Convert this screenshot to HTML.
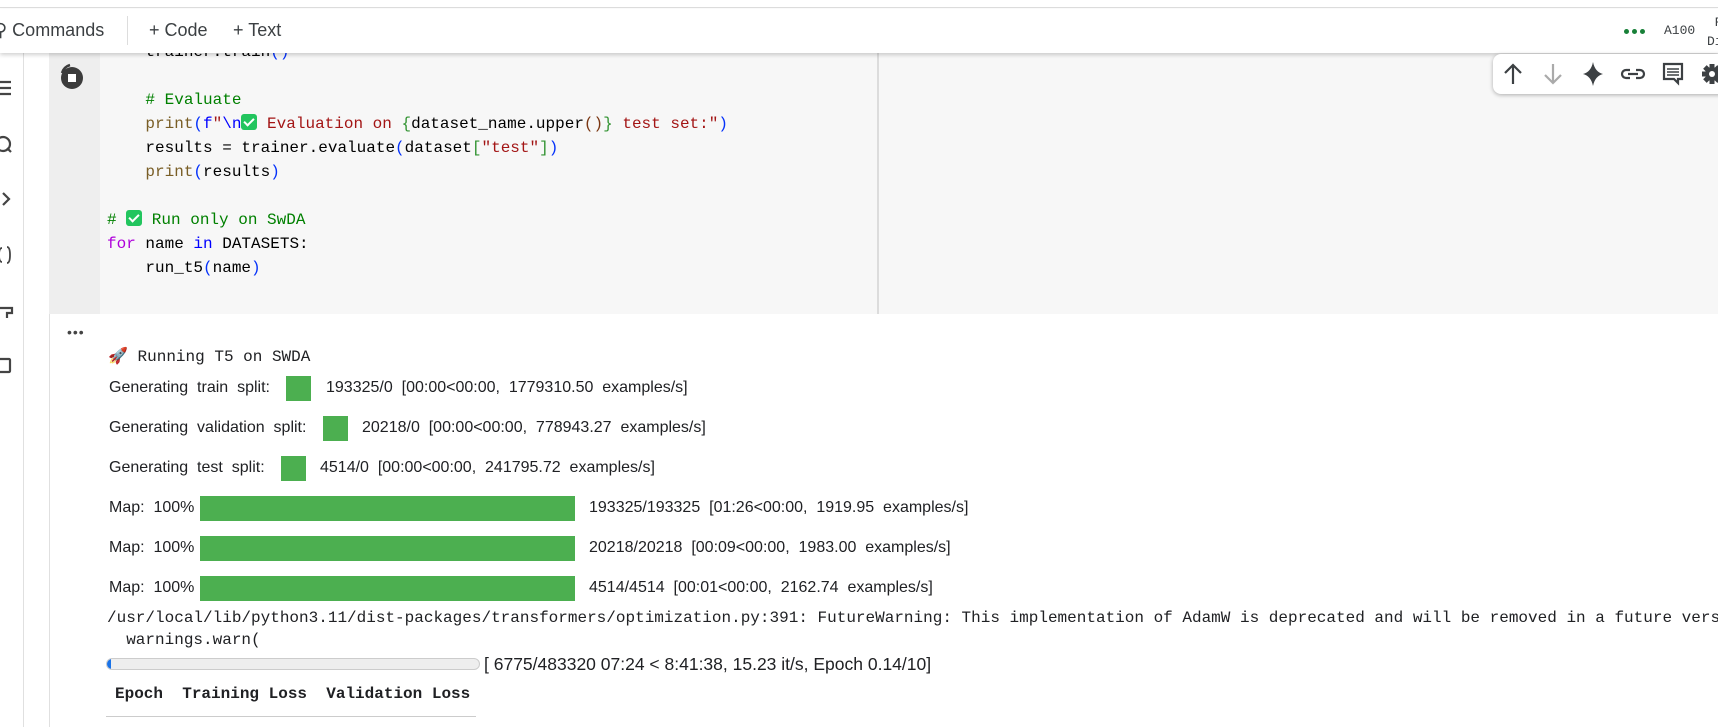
<!DOCTYPE html>
<html><head><meta charset="utf-8"><style>
*{margin:0;padding:0;box-sizing:border-box}
body{width:1718px;height:727px;overflow:hidden;background:#fff;position:relative;font-family:"Liberation Sans",sans-serif;color:#202124}
.abs{position:absolute}
.mono{font-family:"Liberation Mono","DejaVu Sans Mono",monospace;font-size:16px;white-space:pre}
.code{position:absolute;left:107px;font-family:"Liberation Mono",monospace;font-size:16px;white-space:pre;color:#000;line-height:24px}
.cm{color:#008000}.kw{color:#af00db}.kb{color:#0000ff}.fn{color:#795e26}.st{color:#a31515}.p1{color:#0431fa}.p2{color:#319331}.p3{color:#7b3814}
.chk{display:inline-block;width:16px;height:16px;background:#22c55e;border-radius:3px;vertical-align:-2px;position:relative}
.chk:after{content:"";position:absolute;left:5px;top:2px;width:4px;height:8px;border:solid #fff;border-width:0 2px 2px 0;transform:rotate(45deg)}
.out{position:absolute;font-size:16px;color:#202124;white-space:pre}
.gbar{position:absolute;background:#4caf50}
.dot{width:5px;height:5px;border-radius:50%;background:#188038}
</style></head><body>
<div class="abs" style="left:0;top:0;width:1718px;height:8px;background:#fff;border-bottom:1px solid #ddd"></div>
<div class="abs" style="left:0;top:9px;width:1718px;height:44px;background:#fff;box-shadow:0 2px 4px rgba(0,0,0,.18);z-index:3"></div>
<div class="abs" style="z-index:4;left:-6px;top:20px;font-size:18px;color:#3c4043">⚲ Commands</div>
<div class="abs" style="z-index:4;left:127px;top:16px;width:1px;height:29px;background:#ddd"></div>
<div class="abs" style="z-index:4;left:149px;top:20px;font-size:18px;color:#3c4043">+ Code</div>
<div class="abs" style="z-index:4;left:233px;top:20px;font-size:18px;color:#3c4043">+ Text</div>
<div class="abs" style="z-index:4;left:1624px;top:29px;display:flex;gap:3px"><div class="dot"></div><div class="dot"></div><div class="dot"></div></div>
<div class="abs mono" style="z-index:4;left:1664px;top:23px;font-size:13px;color:#3c4043">A100</div>
<div class="abs mono" style="z-index:4;left:1707px;top:13px;font-size:13px;line-height:19px;color:#3c4043"> R
Di</div>
<div class="abs" style="left:23px;top:53px;width:1px;height:674px;background:#e0e0e0"></div>
<svg class="abs" style="left:0;top:53px" width="23" height="340" fill="none" stroke="#444" stroke-width="2.2">
<path d="M0 29h11M0 35h11M0 41h11"/>
<circle cx="3" cy="91" r="7"/><path d="M7 95l4 4"/>
<path d="M3 140l6 6-6 6"/>
<path d="M2 195q-3 0-3 7t3 7M7 194q3 0 3 8t-3 8" stroke-width="1.8"/>
<path d="M0 255h12v5h-5v5"/>
<rect x="-4" y="306" width="14" height="13" rx="1"/>
</svg>
<div class="abs" style="left:49px;top:53px;width:1669px;height:261px;background:#f7f7f7"></div>
<div class="abs" style="left:49px;top:53px;width:51px;height:261px;background:#eeeeee"></div>
<div class="abs" style="left:877px;top:53px;width:2px;height:261px;background:#dcdcdc"></div>
<svg class="abs" style="left:58px;top:63px" width="28" height="28"><circle cx="14" cy="15" r="11" fill="#3c3c3c"/><path d="M4 10a12 12 0 0 1 8-8" stroke="#3c3c3c" stroke-width="2.5" fill="none"/><rect x="10" y="11" width="8" height="8" fill="#fff"/></svg>
<div class="code" style="top:40px">    trainer.train<span class="p1">()</span>

    <span class="cm"># Evaluate</span>
    <span class="fn">print</span><span class="p1">(</span><span class="kb">f</span><span class="st">"</span><span class="kb">\n</span><span class="chk"></span><span class="st"> Evaluation on </span><span class="p2">{</span>dataset_name.upper<span class="p3">()</span><span class="p2">}</span><span class="st"> test set:"</span><span class="p1">)</span>
    results = trainer.evaluate<span class="p1">(</span>dataset<span class="p2">[</span><span class="st">"test"</span><span class="p2">]</span><span class="p1">)</span>
    <span class="fn">print</span><span class="p1">(</span>results<span class="p1">)</span>

<span class="cm"># </span><span class="chk"></span><span class="cm"> Run only on SwDA</span>
<span class="kw">for</span> name <span class="kb">in</span> DATASETS:
    run_t5<span class="p1">(</span>name<span class="p1">)</span></div>
<div class="abs" style="left:1493px;top:54px;width:240px;height:40px;background:#fff;border-radius:8px;box-shadow:0 1px 4px rgba(0,0,0,.3);z-index:5"></div>
<svg class="abs" style="left:1493px;top:54px;z-index:6" width="225" height="40" fill="none" stroke-width="2.2">
<path d="M20 30V11M12 19l8-8 8 8" stroke="#3c4043"/>
<path d="M60 10v19M52 21l8 8 8-8" stroke="#aaa"/>
<path d="M100 8q2 10 10 12q-8 2-10 12q-2-10-10-12q8-2 10-12z" fill="#3c4043"/>
<path d="M137 16h-4a4 4 0 0 0 0 8h4M143 16h4a4 4 0 0 1 0 8h-4M135 20h10" stroke="#3c4043"/>
<path d="M171 10h18v15h-4v4l-4-4h-10z" stroke="#3c4043"/><path d="M174 15h12M174 18h12M174 21h12" stroke="#3c4043" stroke-width="1.5"/>
<g fill="#3c4043" stroke="none"><circle cx="219" cy="20" r="7"/><rect x="216.5" y="10" width="5" height="20"/><rect x="209" y="17.5" width="20" height="5"/><rect x="216.5" y="10" width="5" height="20" transform="rotate(45 219 20)"/><rect x="216.5" y="10" width="5" height="20" transform="rotate(-45 219 20)"/></g><circle cx="219" cy="20" r="3" fill="#fff"/>
</svg>
<div class="abs" style="left:49px;top:314px;width:1px;height:413px;background:#e0e0e0"></div>
<div class="abs" style="left:67px;top:324px;font-size:14px;color:#444;letter-spacing:1px">•••</div>
<div class="abs mono" style="left:108px;top:346px">🚀 Running T5 on SWDA</div>
<div class="out" style="left:109px;top:379px">Generating  train  split: </div>
<div class="gbar" style="left:286px;top:376px;width:25px;height:25px"></div>
<div class="out" style="left:326px;top:379px">193325/0  [00:00&lt;00:00,  1779310.50  examples/s]</div>
<div class="out" style="left:109px;top:419px">Generating  validation  split: </div>
<div class="gbar" style="left:323px;top:416px;width:25px;height:25px"></div>
<div class="out" style="left:362px;top:419px">20218/0  [00:00&lt;00:00,  778943.27  examples/s]</div>
<div class="out" style="left:109px;top:459px">Generating  test  split: </div>
<div class="gbar" style="left:281px;top:456px;width:25px;height:25px"></div>
<div class="out" style="left:320px;top:459px">4514/0  [00:00&lt;00:00,  241795.72  examples/s]</div>
<div class="out" style="left:109px;top:499px">Map:  100%</div>
<div class="gbar" style="left:200px;top:496px;width:375px;height:25px"></div>
<div class="out" style="left:589px;top:499px">193325/193325  [01:26&lt;00:00,  1919.95  examples/s]</div>
<div class="out" style="left:109px;top:539px">Map:  100%</div>
<div class="gbar" style="left:200px;top:536px;width:375px;height:25px"></div>
<div class="out" style="left:589px;top:539px">20218/20218  [00:09&lt;00:00,  1983.00  examples/s]</div>
<div class="out" style="left:109px;top:579px">Map:  100%</div>
<div class="gbar" style="left:200px;top:576px;width:375px;height:25px"></div>
<div class="out" style="left:589px;top:579px">4514/4514  [00:01&lt;00:00,  2162.74  examples/s]</div>
<div class="abs mono" style="left:107px;top:607px;line-height:22px;color:#202124">/usr/local/lib/python3.11/dist-packages/transformers/optimization.py:391: FutureWarning: This implementation of AdamW is deprecated and will be removed in a future version.
  warnings.warn(</div>
<div class="abs" style="left:106px;top:658px;width:374px;height:12px;border:1px solid #ccc;border-radius:6px;background:#eee;overflow:hidden"><div style="width:4px;height:12px;background:#1a73e8"></div></div>
<div class="out" style="left:484px;top:654px;font-size:17.5px">[ 6775/483320 07:24 &lt; 8:41:38, 15.23 it/s, Epoch 0.14/10]</div>
<div class="abs mono" style="left:115px;top:685px;font-weight:bold;font-size:16px">Epoch  Training Loss  Validation Loss</div>
<div class="abs" style="left:106px;top:716px;width:370px;height:1px;background:#ccc"></div>
</body></html>
